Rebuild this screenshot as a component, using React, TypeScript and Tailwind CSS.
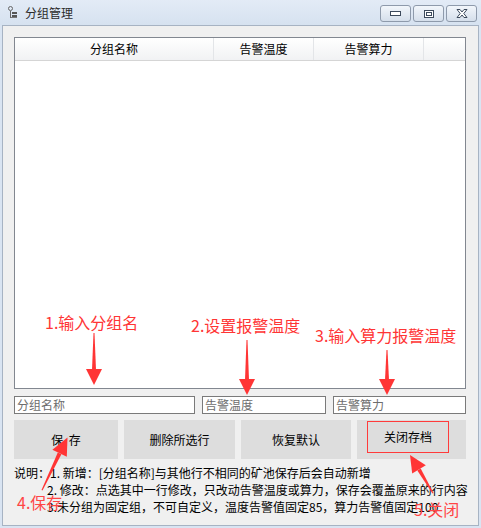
import React from "react";

const F = { fontFamily: '"Noto Sans CJK SC", "Liberation Sans", sans-serif' };

function TitleIcon() {
  return (
    <svg width="10" height="13" viewBox="0 0 10 13" className="shrink-0">
      <circle cx="2.5" cy="2.5" r="2" fill="none" stroke="#666" strokeWidth="1" />
      <rect x="2" y="5" width="1" height="7" fill="#666" />
      <rect x="4" y="6" width="5" height="2" fill="#555" />
      <rect x="4" y="9" width="5" height="2" fill="#555" />
      <rect x="3" y="11" width="6" height="1" fill="#777" />
    </svg>
  );
}

function CapBtn({ children }: { children: React.ReactNode }) {
  return (
    <div className="w-[31px] h-[17px] rounded-[3px] border border-[#8e9aab] bg-gradient-to-b from-[#f2f6fb] to-[#d5dfeb] flex items-center justify-center">
      {children}
    </div>
  );
}

function Arrows() {
  const red = "#ff3535";
  return (
    <svg
      className="absolute left-0 top-0 pointer-events-none"
      width="481"
      height="528"
      viewBox="0 0 481 528"
    >
      <polygon points="93.5,333 94.5,333 96,370 92,370" fill={red} />
      <polygon points="86,369 102,369 94,385" fill={red} />
      <polygon points="246.5,340 247.5,340 249,380 245,380" fill={red} />
      <polygon points="239,379 255,379 247,395" fill={red} />
      <polygon points="386.5,350 387.5,350 389,380 385,380" fill={red} />
      <polygon points="379,379 395,379 387,395" fill={red} />
      <polygon points="41.5,490 42.5,490.5 61.4,454.2 57.8,452.4" fill={red} />
      <polygon points="67.5,437.5 66.8,456.8 52.4,449.8" fill={red} />
      <polygon points="433.5,493 432.5,493.5 417.3,470.5 420.7,468.4" fill={red} />
      <polygon points="410,455 425.8,465.2 412.2,473.6" fill={red} />
    </svg>
  );
}

export default function App() {
  return (
    <div
      className="relative w-[481px] h-[528px] bg-[#d9e4f2] flex flex-col overflow-hidden"
      style={F}
    >
      {/* title bar */}
      <div className="h-[25px] flex items-start bg-gradient-to-b from-[#e3ebf6] to-[#d6e2f0]">
        <div className="flex items-center gap-[7px] pl-[8px] pt-[6px] h-[19px]">
          <TitleIcon />
          <span className="text-[12px] leading-none text-[#2b2b2b]">分组管理</span>
        </div>
        <div className="ml-auto flex gap-[2px] pt-[5px] pr-[4px]">
          <CapBtn>
            <svg width="11" height="5" viewBox="0 0 11 5">
              <rect x="0.5" y="0.5" width="10" height="4" fill="#fff" stroke="#3c4a5c" />
            </svg>
          </CapBtn>
          <CapBtn>
            <svg width="10" height="8" viewBox="0 0 10 8">
              <rect x="0.5" y="0.5" width="9" height="7" fill="#fff" stroke="#3c4a5c" />
              <rect x="2.5" y="2.5" width="5" height="3" fill="none" stroke="#3c4a5c" />
            </svg>
          </CapBtn>
          <CapBtn>
            <svg width="12" height="9" viewBox="0 0 12 9">
              <path
                d="M1 0.5 L4 0.5 L6 3 L8 0.5 L11 0.5 L7.8 4.5 L11 8.5 L8 8.5 L6 6 L4 8.5 L1 8.5 L4.2 4.5 Z"
                fill="#fff"
                stroke="#3c4a5c"
                strokeWidth="1"
                strokeLinejoin="round"
              />
            </svg>
          </CapBtn>
        </div>
      </div>

      {/* client area */}
      <div className="flex-1 ml-[2px] mr-[2px] mb-[2px] border border-[#a7b3c3] bg-[#f0f0f0] flex flex-col pl-[11px] pr-[9px] pt-[11px]">
        {/* list view */}
        <div className="w-[452px] h-[352px] border border-[#828790] bg-white flex flex-col">
          <div className="h-[23px] flex bg-gradient-to-b from-white to-[#f1f2f4] border-b border-[#d5d5d5] text-[12px] text-black">
            <div className="w-[199px] flex items-center justify-center border-r border-[#e3e5e8]">分组名称</div>
            <div className="w-[100px] flex items-center justify-center border-r border-[#e3e5e8]">告警温度</div>
            <div className="w-[110px] flex items-center justify-center border-r border-[#e3e5e8]">告警算力</div>
            <div className="flex-1" />
          </div>
          <div className="flex-1" />
        </div>

        {/* inputs */}
        <div className="mt-[7px] flex gap-[7px] text-[12px]">
          <div className="w-[181px] h-[18px] border border-[#7a7a7a] bg-white flex items-center pl-[2px] text-[#6d6d6d] leading-none">分组名称</div>
          <div className="w-[124px] h-[18px] border border-[#7a7a7a] bg-white flex items-center pl-[2px] text-[#6d6d6d] leading-none">告警温度</div>
          <div className="w-[133px] h-[18px] border border-[#7a7a7a] bg-white flex items-center pl-[2px] text-[#6d6d6d] leading-none">告警算力</div>
        </div>

        {/* buttons */}
        <div className="mt-[6px] flex gap-[6px] text-[12px] text-black">
          <div className="w-[104px] h-[39px] bg-[#dddddd] flex items-center justify-center">保&nbsp;&nbsp;存</div>
          <div className="w-[111px] h-[39px] bg-[#dddddd] flex items-center justify-center">删除所选行</div>
          <div className="w-[110px] h-[39px] bg-[#dddddd] flex items-center justify-center">恢复默认</div>
          <div className="w-[109px] h-[39px] bg-[#dddddd] flex items-start pt-[1px] pl-[10px]">
            <div className="w-[82px] h-[32px] border border-[#ff3b3b] flex items-center justify-center">关闭存档</div>
          </div>
        </div>

        {/* notes */}
        <div className="mt-[5px] text-[12px] leading-[17px] text-black whitespace-nowrap">
          <div>说明：1. 新增：[分组名称]与其他行不相同的矿池保存后会自动新增</div>
          <div className="pl-[33px]">2. 修改：点选其中一行修改，只改动告警温度或算力，保存会覆盖原来的行内容</div>
          <div className="pl-[33px]">3.未分组为固定组，不可自定义，温度告警值固定85，算力告警值固定100</div>
        </div>
      </div>

      {/* annotations */}
      <Arrows />
      <div className="absolute left-[45px] top-[314px] text-[16px] leading-none text-[#ff3535] whitespace-nowrap">1.输入分组名</div>
      <div className="absolute left-[191px] top-[317px] text-[16px] leading-none text-[#ff3535] whitespace-nowrap">2.设置报警温度</div>
      <div className="absolute left-[315px] top-[327px] text-[16px] leading-none text-[#ff3535] whitespace-nowrap">3.输入算力报警温度</div>
      <div className="absolute left-[17px] top-[494px] text-[16px] leading-none text-[#ff4545] whitespace-nowrap">4.保存</div>
      <div className="absolute left-[414px] top-[501px] text-[16px] leading-none text-[#ff4545] whitespace-nowrap">5.关闭</div>
    </div>
  );
}
